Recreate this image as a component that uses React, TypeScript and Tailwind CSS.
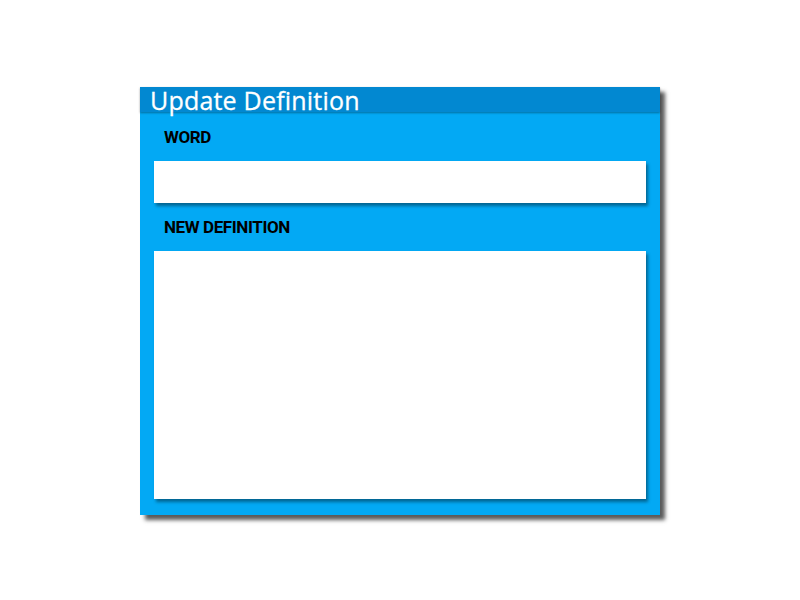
import React from "react";

export default function App() {
  return (
    <div className="w-[800px] h-[600px] bg-white relative" style={{ fontFamily: "Roboto, 'Liberation Sans', sans-serif" }}>
      <div className="absolute left-[140px] top-[87px] w-[520px] h-[428px] bg-[#03a9f4] shadow-[5px_5px_4px_rgba(0,0,0,0.65)] flex flex-col">
        <div className="h-[25px] bg-[#0288d1] shadow-[0_1px_2px_rgba(0,0,0,0.35)] relative z-10">
          <div className="pl-[10px] text-white text-[25px] font-medium tracking-[0.2px] leading-[30px] -mt-[2px] whitespace-nowrap [-webkit-text-stroke:0.3px_white]" style={{ fontFamily: "'Open Sans', sans-serif" }}>Update Definition</div>
        </div>
        <div className="flex flex-col px-[14px]">
          <div className="h-[49px] flex items-center pl-[10px] pt-[3px] text-[17px] font-bold tracking-[-0.4px] text-black">WORD</div>
          <div className="h-[42px] bg-white shadow-[2px_3px_3px_rgba(0,0,0,0.4)]"></div>
          <div className="h-[48px] flex items-center pl-[10px] pt-[2px] text-[17px] font-bold tracking-[-0.4px] text-black">NEW DEFINITION</div>
          <div className="h-[248px] bg-white shadow-[2px_3px_3px_rgba(0,0,0,0.4)]"></div>
        </div>
      </div>
    </div>
  );
}
